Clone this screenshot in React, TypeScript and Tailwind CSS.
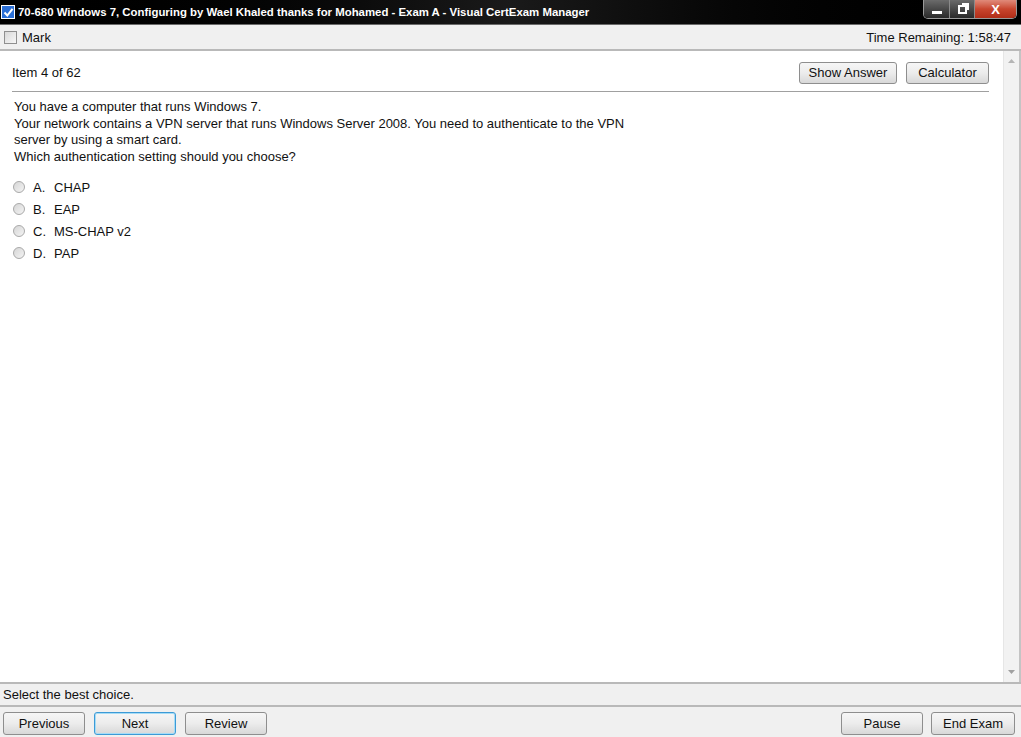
import React from 'react';

const font = { fontFamily: '"Liberation Sans", Arial, sans-serif' };

const Btn: React.FC<{ label: string; w: string; h?: string; focused?: boolean }> = ({ label, w, h = 'h-[22px]', focused }) => (
  <button
    type="button"
    className={`${w} ${h} rounded-[3px] border text-[13px] text-[#111] bg-gradient-to-b from-[#f6f6f6] via-[#ececec] to-[#d8d8d8] ${
      focused ? 'border-[#3c9ad6] shadow-[inset_0_0_0_1px_#a6dcf6]' : 'border-[#8e8e8e]'
    }`}
  >
    {label}
  </button>
);

const Radio = () => (
  <span className="w-[12px] h-[12px] rounded-full border border-[#a9a9a9] bg-gradient-to-br from-[#d6d6d6] to-[#f4f4f4] inline-block" />
);

const options = [
  ['A.', 'CHAP'],
  ['B.', 'EAP'],
  ['C.', 'MS-CHAP v2'],
  ['D.', 'PAP'],
];

export default function App() {
  return (
    <div className="w-[1021px] h-[737px] flex flex-col bg-[#f0f0f0] overflow-hidden" style={font}>
      {/* title bar */}
      <div className="h-[25px] flex items-start bg-gradient-to-r from-black via-[#1a1a1a] to-black border-b border-[#6a6a6a] relative">
        <div className="mt-[5px] ml-[1px] w-[14px] h-[14px] bg-[#2b6fd6] border border-white flex items-center justify-center">
          <svg width="11" height="11" viewBox="0 0 11 11">
            <path d="M1.5 5.5 L4.3 8.5 L9.5 1.8" stroke="white" strokeWidth="2" fill="none" />
          </svg>
        </div>
        <span className="ml-[3px] mt-[5px] text-white font-bold text-[11.4px] leading-[14px]">
          70-680 Windows 7, Configuring by Wael Khaled thanks for Mohamed - Exam A - Visual CertExam Manager
        </span>
        <div className="absolute right-[4px] top-0 h-[19px] flex rounded-b-[5px] border border-t-0 border-[#9a9a9a] overflow-hidden">
          <div className="w-[26px] bg-gradient-to-b from-[#6b6b6b] to-[#2a2a2a] border-r border-[#8a8a8a] flex items-center justify-center">
            <div className="w-[10px] h-[3px] bg-white mt-[6px]" />
          </div>
          <div className="w-[25px] bg-gradient-to-b from-[#6b6b6b] to-[#2a2a2a] border-r border-[#8a8a8a] flex items-center justify-center">
            <div className="w-[9px] h-[9px] border-2 border-white relative">
              <div className="absolute -top-[4px] -right-[4px] w-[7px] h-[7px] border-t-2 border-r-2 border-white" />
            </div>
          </div>
          <div className="w-[41px] bg-gradient-to-b from-[#e08a7a] via-[#c8452e] to-[#b12d18] flex items-center justify-center">
            <span className="text-white font-bold text-[13px] leading-none">X</span>
          </div>
        </div>
      </div>

      {/* mark bar */}
      <div className="h-[26px] flex items-center justify-between border-b-2 border-[#b9b9b9] pl-[4px] pr-[10px] pt-[1px]">
        <div className="flex items-center gap-[5px]">
          <span className="w-[13px] h-[13px] border border-[#8f8f8f] bg-gradient-to-br from-[#d8d8d8] to-[#f7f7f7]" />
          <span className="text-[13px] text-[#111]">Mark</span>
        </div>
        <span className="text-[13px] text-[#111]">Time Remaining: 1:58:47</span>
      </div>

      {/* content */}
      <div className="flex-1 flex bg-white border-r-2 border-[#c4c4c4]">
        <div className="flex-1 pl-[12px] pr-[14px] pt-[11px]">
          <div className="flex items-center justify-between h-[22px]">
            <span className="text-[13px] text-[#111]">Item 4 of 62</span>
            <div className="flex gap-[9px]">
              <Btn label="Show Answer" w="w-[98px]" />
              <Btn label="Calculator" w="w-[83px]" />
            </div>
          </div>
          <div className="mt-[7px] border-t border-[#a0a0a0]" />
          <div className="mt-[7px] pl-[2px] text-[13px] leading-[16.6px] text-[#111]">
            <div>You have a computer that runs Windows 7.</div>
            <div>Your network contains a VPN server that runs Windows Server 2008. You need to authenticate to the VPN</div>
            <div>server by using a smart card.</div>
            <div>Which authentication setting should you choose?</div>
          </div>
          <div className="mt-[11px] flex flex-col">
            {options.map(([l, t]) => (
              <div key={l} className="h-[22px] flex items-center text-[13px] text-[#111]">
                <span className="ml-[1px] flex"><Radio /></span>
                <span className="ml-[8px] w-[21px]">{l}</span>
                <span>{t}</span>
              </div>
            ))}
          </div>
        </div>
        <div className="w-[16px] bg-[#f2f2f2] border-l border-[#e6e6e6] flex flex-col items-center justify-between py-[8px]">
          <svg width="7" height="4" viewBox="0 0 7 4"><path d="M0 4 L3.5 0 L7 4Z" fill="#b5b5b5" /></svg>
          <svg width="7" height="4" viewBox="0 0 7 4"><path d="M0 0 L3.5 4 L7 0Z" fill="#a0a0a0" /></svg>
        </div>
      </div>

      {/* status */}
      <div className="h-[25px] flex items-center border-t-2 border-b-2 border-[#b9b9b9] pl-[3px]">
        <span className="text-[13px] text-[#111]">Select the best choice.</span>
      </div>

      {/* nav */}
      <div className="h-[30px] flex items-start justify-between px-[3px] pt-[5px]">
        <div className="flex gap-[9px]">
          <Btn label="Previous" w="w-[82px]" h="h-[23px]" />
          <Btn label="Next" w="w-[82px]" h="h-[23px]" focused />
          <Btn label="Review" w="w-[82px]" h="h-[23px]" />
        </div>
        <div className="flex gap-[8px] pr-[3px]">
          <Btn label="Pause" w="w-[82px]" h="h-[23px]" />
          <Btn label="End Exam" w="w-[84px]" h="h-[23px]" />
        </div>
      </div>
    </div>
  );
}
